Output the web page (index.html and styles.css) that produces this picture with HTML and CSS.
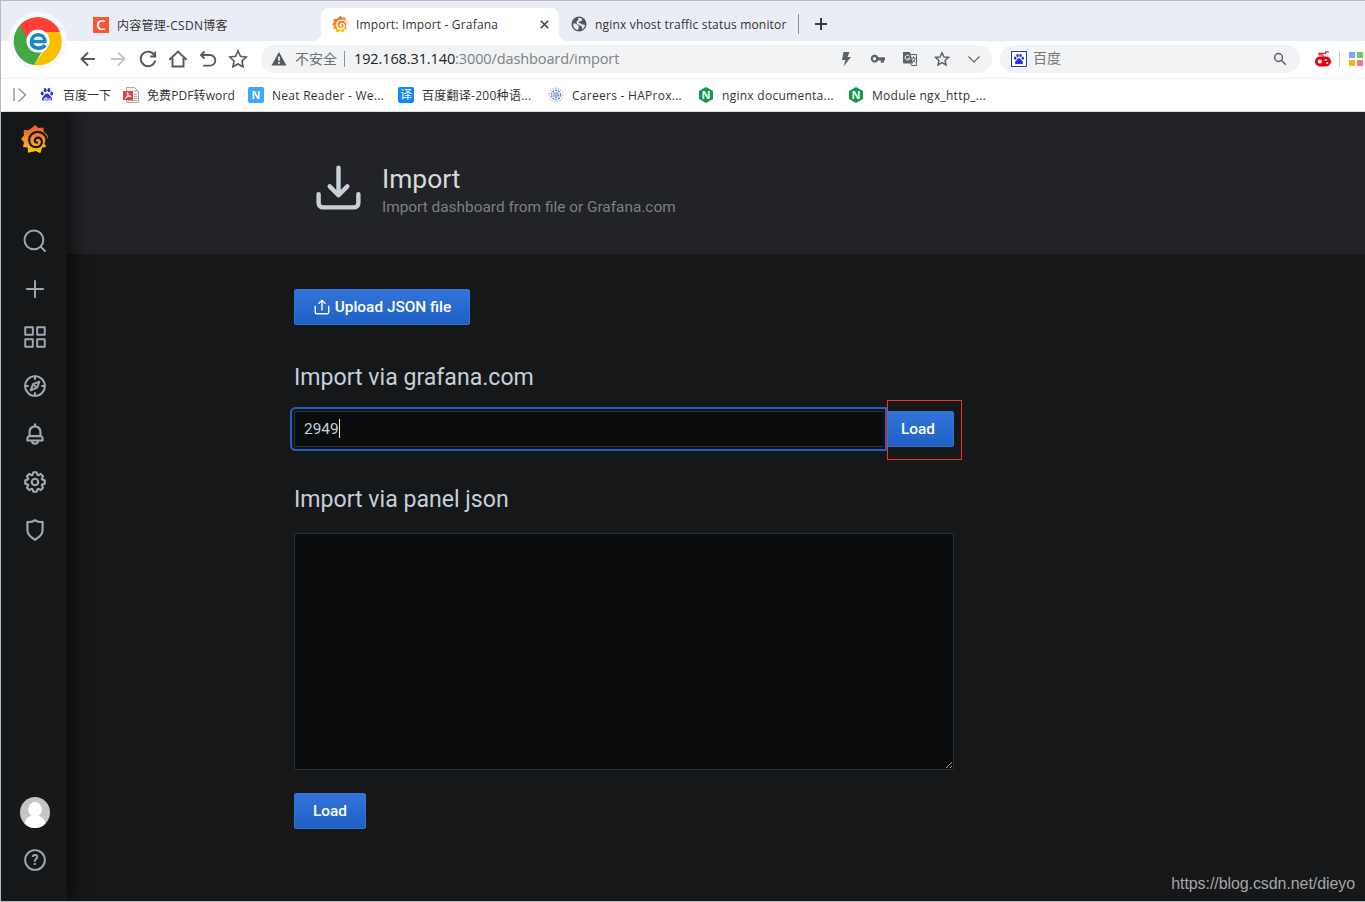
FILE: index.html
```html
<!DOCTYPE html>
<html lang="zh-CN">
<head>
    <meta charset="UTF-8">
    <meta name="viewport" content="width=device-width, initial-scale=1.0">
    <title>Import: Import - Grafana</title>
    <link rel="stylesheet" href="styles.css">
</head>
<body>

<!-- shared symbols -->
<svg width="0" height="0" class="defs">
    <defs>
        <linearGradient id="flame" x1="0" y1="0" x2="0" y2="1">
            <stop offset="0" stop-color="#f05a28"/>
            <stop offset="0.45" stop-color="#f7882a"/>
            <stop offset="1" stop-color="#fbca0a"/>
        </linearGradient>
        <symbol id="grafana" viewBox="0 0 27 29">
            <path fill="url(#flame)" d="M14.3 0l3 3 4.9-.6.7 4.4 3.6 3.4.3 4-2.200-.2c-.2 2-.6 3.400-1.200 4.800l2 2.800-4.300 1.200-1.800 5.500-4.400-2.300-7.900 1.800-.3-5.200-4.700-.5 1-4.500L0 14l3-3.400-.3-5.500 5.100.1z"/>
            <path class="swirl" d="M26 15.500C25.200 9.500 20.500 6.600 16 6.900C11 7.300 8 11.100 8.200 15.200C8.400 19.600 11.600 22.200 15.200 22.200C18.800 22.200 21 19.600 20.900 16.800C20.800 14 18.800 12.500 16.800 12.700C14.800 12.900 13.700 14.400 13.900 16C14.100 17.200 15 17.800 16 17.500"/>
        </symbol>
        <symbol id="paw" viewBox="0 0 16 16">
            <ellipse cx="2.6" cy="6.8" rx="1.7" ry="2.2"/>
            <ellipse cx="5.9" cy="3" rx="1.7" ry="2.4"/>
            <ellipse cx="10.2" cy="3" rx="1.7" ry="2.4"/>
            <ellipse cx="13.4" cy="6.8" rx="1.7" ry="2.2"/>
            <path d="M8 6.8c2 0 2.6 1.8 4 3.2 1.700 1.600 2 2.700 1.500 4-.6 1.600-2.500 1.600-5.500 1.300-3 .3-4.900.3-5.500-1.300-.5-1.300-.2-2.400 1.500-4 1.400-1.400 2-3.200 4-3.200z"/>
        </symbol>
        <symbol id="nginx" viewBox="0 0 16 16">
            <path fill="#119949" d="M8 0l7 4v8l-7 4-7-4V4z"/>
            <text x="8" y="12" text-anchor="middle" class="badge-text">N</text>
        </symbol>
    </defs>
</svg>

<div class="window">
    <div class="chrome-logo">
        <svg width="58" height="58" viewBox="-29 -29 58 58">
            <circle r="29" fill="#f8f9fc"/>
            <path fill="#fc3f33" d="M-18-16A24 24 0 0 1 22-9H0L-10 4z"/>
            <path fill="#fbbf00" d="M22-9A24 24 0 0 1-4 24L9 5L0-9z"/>
            <path fill="#43a745" d="M-18-16A24 24 0 0 0-4 24L6 7L-9 1z"/>
            <circle r="11.500" fill="#fff"/>
            <path fill="none" stroke="#1b87c4" stroke-width="3.600" d="M-6.500.5H7C7-8-6-9-6.500.5C-7 8 4 9 7 4"/>
        </svg>
    </div>

    <div class="tabs">
        <div class="tab tab-first">
            <span class="csdn">C</span>
            <span>内容管理-CSDN博客</span>
        </div>
        <div class="tab tab-active">
            <svg class="light" width="16" height="17"><use href="#grafana"/></svg>
            <span>Import: Import - Grafana</span>
            <svg class="close" width="9" height="9" viewBox="0 0 9 9"><path d="M.8.8l7.400 7.400M8.200.8L.8 8.200"/></svg>
        </div>
        <div class="tab tab-last">
            <svg width="16" height="16" viewBox="0 0 16 16">
                <circle cx="8" cy="8" r="7.500" fill="#54585d"/>
                <path fill="#eaedf5" d="M2.200 7.500c2-.2 3.300.2 4 1.300.6 1 2 .6 1.800 2.200L6.700 14C4 13.500 2 11 2.200 7.500zM7 2.300c1.500-.5 3-.2 4.200.5L10.500 5 8 5.500 7.500 7l2 .3 1 1 2.500.4 1 .3c-.3 2-1.500 3.600-3 4.400l.2-2.400-2-1.500L6 8 5.500 5.500 7.500 4z"/>
            </svg>
            <span>nginx vhost traffic status monitor</span>
        </div>
        <svg class="new-tab" width="12" height="12" viewBox="0 0 12 12"><path d="M6 0v12M0 6h12"/></svg>
    </div>

    <div class="toolbar">
        <div class="nav">
            <svg viewBox="0 0 20 20"><path d="M17 10H4M10 3.500L3.500 10l6.500 6.500"/></svg>
            <svg viewBox="0 0 20 20" class="off"><path d="M3 10h13M10 3.500l6.500 6.500-6.500 6.500"/></svg>
            <svg viewBox="0 0 20 20"><path d="M16.500 6.500A7.300 7.300 0 1 0 17.200 11.500M17.200 2.500v5h-5"/></svg>
            <svg viewBox="0 0 20 20"><path d="M1.500 10.800L10 2.500l8.500 8.300M4.500 9v8.500h11V9"/></svg>
            <svg viewBox="0 0 20 20"><path d="M6.500 2.500L3 6l3.500 3.500M3.500 6H12a5.300 5.300 0 0 1 0 10.600H5"/></svg>
            <svg viewBox="0 0 20 20" class="star"><path d="M10 2l2.500 5.300 5.700.7-4.200 4 1.100 5.800L10 15l-5.100 2.800L6 12 1.800 8l5.700-.7z"/></svg>
        </div>
        <div class="omnibox">
            <svg width="16" height="14" viewBox="0 0 16 14"><path fill="#55595e" d="M8 0l7.500 13.500H.5z"/><path stroke="#fff" stroke-width="1.600" d="M8 4.500v4.300M8 10v1.700"/></svg>
            <span class="unsafe">不安全</span>
            <span class="url"><b>192.168.31.140</b>:3000/dashboard/import</span>
            <div class="omni-icons">
                <svg width="16" height="16" viewBox="0 0 16 16"><path class="solid" d="M5.500 1h6L9.500 6H13L5.500 15.500 7.500 9H4z"/></svg>
                <svg width="16" height="16" viewBox="0 0 16 16"><path class="solid" fill-rule="evenodd" d="M4.500 3.500a4 4 0 0 1 3.800 2.700H15v3.200h-1.200v2.400h-3V9.400H8.300A4 4 0 1 1 4.500 3.500zM4.500 6a1.700 1.700 0 1 0 0 3.400 1.700 1.700 0 0 0 0-3.400z"/></svg>
                <svg width="16" height="16" viewBox="0 0 16 16">
                    <path class="solid" d="M1 1h7l3 11.500H2L1 12z"/>
                    <path fill="none" stroke="#5f6368" d="M8.500 3.500H14.500v11H9.500l-1-2"/>
                    <path fill="none" stroke="#fff" d="M7.500 5.200a2.400 2.400 0 1 0 .3 2.200H5.500"/>
                    <path fill="none" stroke="#5f6368" d="M9.500 7h4M11.500 5.500V7M13 7c-.5 2-1.500 3.500-3 4.500M10.500 8.500l2.800 3"/>
                </svg>
                <svg width="16" height="16" viewBox="0 0 16 16"><path class="line" d="M8 1.800l1.900 4.100 4.500.5-3.300 3.100.9 4.500-4-2.300L4 14l.9-4.500L1.600 6.400l4.500-.5z"/></svg>
                <svg width="16" height="16" viewBox="0 0 16 16"><path class="line thin" d="M2.500 5.500L8 11l5.500-5.500"/></svg>
            </div>
        </div>
        <div class="searchbox">
            <svg class="baidu-box" width="16" height="16" viewBox="-2 -2 20 20"><use href="#paw" width="16" height="16"/></svg>
            <span>百度</span>
            <svg width="14" height="14" viewBox="0 0 14 14"><circle class="line" cx="5.500" cy="5.500" r="3.900"/><path class="line" d="M8.300 8.300l4.500 4.500"/></svg>
        </div>
        <svg class="game" width="16" height="16" viewBox="0 0 16 16">
            <path fill="none" stroke="#e9253a" stroke-width="1.200" d="M8 6V3.800H4V2.300h6.500V.8H14"/>
            <rect y="5.500" width="16" height="10" rx="5" fill="#e60012"/>
            <circle cx="4.800" cy="10.500" r="2.100" fill="#fff"/>
            <circle cx="10.700" cy="9" r="1.100" fill="#fff"/><circle cx="12.300" cy="12" r="1.100" fill="#fff"/>
        </svg>
        <span class="tool-sep"></span>
        <div class="apps"><i class="blue"></i><i class="green"></i><i class="yellow"></i><i class="red"></i></div>
    </div>

    <div class="bookmarks">
        <svg class="expand" width="14" height="16" viewBox="0 0 14 16"><path d="M1 1v13M5.500 1.500L12.500 8l-7 6.500"/></svg>
        <div class="bm bm-1">
            <svg width="16" height="16" class="paw"><use href="#paw" width="14" height="15" x="1"/><text x="8" y="13.500" text-anchor="middle" class="du">du</text></svg>
            <span>百度一下</span>
        </div>
        <div class="bm bm-2">
            <svg width="16" height="16" viewBox="0 0 16 16">
                <path fill="#f4f4f4" stroke="#aaa" d="M3.500.5h8l4 4v11h-12z"/>
                <path stroke="#aaa" d="M11 4h4M11 7.500h3M11 9.500h3M11 11.500h3M5 13.500h9"/>
                <path fill="#e0413d" d="M0 4h10v9H0z"/>
                <path fill="none" stroke="#fff" d="M2 11.500c2.500-1 3.500-4 3-5.500s-1.500.5 0 2.500 3 1.500 3 .7-3-.5-5.500 1.800"/>
            </svg>
            <span>免费PDF转word</span>
        </div>
        <div class="bm">
            <span class="sq sky">N</span>
            <span>Neat Reader - We...</span>
        </div>
        <div class="bm">
            <span class="sq azure">译</span>
            <span>百度翻译-200种语...</span>
        </div>
        <div class="bm">
            <svg width="16" height="16" viewBox="0 0 16 16" class="hap">
                <circle cx="8" cy="8" r="6.800" stroke-dasharray="1.500 1.300" stroke="#b5c8dc"/>
                <circle cx="8" cy="8" r="4.600" stroke-dasharray="1.800 1.100"/>
                <circle cx="8" cy="8" r="2.200" stroke-dasharray="1.400 .9"/>
                <path d="M8 3v10M3 8h10M4.500 4.500l7 7M11.500 4.500l-7 7" stroke-width=".4"/>
            </svg>
            <span>Careers - HAProx...</span>
        </div>
        <div class="bm">
            <svg width="16" height="16"><use href="#nginx"/></svg>
            <span>nginx documenta...</span>
        </div>
        <div class="bm">
            <svg width="16" height="16"><use href="#nginx"/></svg>
            <span>Module ngx_http_...</span>
        </div>
    </div>

    <div class="grafana">
        <div class="sidemenu">
            <svg class="logo" width="27" height="29"><use href="#grafana"/></svg>
            <div class="menu">
                <svg viewBox="0 0 24 24"><g class="stroke"><circle cx="11" cy="11" r="8.700"/><path d="M17.200 17.200l4 4"/></g></svg>
                <svg viewBox="0 0 24 24"><path class="stroke" d="M12 4.500v15M4.500 12h15"/></svg>
                <svg viewBox="0 0 24 24"><path class="stroke" d="M3 3h7v7H3zM14 3h7v7h-7zM3 14h7v7H3zM14 14h7v7h-7z"/></svg>
                <svg viewBox="0 0 24 24"><g class="stroke"><circle cx="12" cy="12" r="9.100"/><path d="M12 3v2.500M12 18.500V21M3 12h2.500M18.500 12H21M16 8l-2 5.500L8 16l2.200-5.700z"/><path d="M11.500 11.500l1 1"/></g></svg>
                <svg viewBox="0 0 24 24"><path d="M18,13.180V10a6,6,0,0,0-5-5.910V3a1,1,0,0,0-2,0V4.090A6,6,0,0,0,6,10v3.180A3,3,0,0,0,4,16v2a1,1,0,0,0,1,1H8.140a4,4,0,0,0,7.720,0H19a1,1,0,0,0,1-1V16A3,3,0,0,0,18,13.180ZM8,10a4,4,0,0,1,8,0v3H8Zm4,10a2,2,0,0,1-1.720-1h3.440A2,2,0,0,1,12,20Zm6-3H6V16a1,1,0,0,1,1-1H17a1,1,0,0,1,1,1Z"/></svg>
                <svg viewBox="0 0 24 24"><path d="M21.320,9.550l-1.890-.63.89-1.780A1,1,0,0,0,20.130,6L18,3.870a1,1,0,0,0-1.150-.19l-1.780.89-.63-1.890A1,1,0,0,0,13.500,2h-3a1,1,0,0,0-.95.68L8.920,4.570,7.140,3.680A1,1,0,0,0,6,3.870L3.870,6a1,1,0,0,0-.19,1.150l.89,1.780-1.890.63A1,1,0,0,0,2,10.500v3a1,1,0,0,0,.68.950l1.890.63-.89,1.780A1,1,0,0,0,3.870,18L6,20.130a1,1,0,0,0,1.150.19l1.780-.89.63,1.890a1,1,0,0,0,.95.680h3a1,1,0,0,0,.95-.68l.63-1.890,1.780.89A1,1,0,0,0,18,20.130L20.130,18a1,1,0,0,0,.19-1.150l-.89-1.780,1.890-.63A1,1,0,0,0,22,13.500v-3A1,1,0,0,0,21.320,9.550ZM20,12.780l-1.200.4A2,2,0,0,0,17.640,16l.57,1.140-1.100,1.100L16,17.640a2,2,0,0,0-2.790,1.160l-.4,1.200H11.220l-.4-1.200A2,2,0,0,0,8,17.640l-1.140.57-1.100-1.100L6.360,16A2,2,0,0,0,5.200,13.180L4,12.780V11.220l1.200-.4A2,2,0,0,0,6.360,8L5.790,6.890l1.100-1.100L8,6.360A2,2,0,0,0,10.820,5.200l.4-1.200h1.560l.4,1.200A2,2,0,0,0,16,6.360l1.140-.57,1.100,1.100L17.640,8a2,2,0,0,0,1.160,2.790l1.200.4ZM12,8a4,4,0,1,0,4,4A4,4,0,0,0,12,8Zm0,6a2,2,0,1,1,2-2A2,2,0,0,1,12,14Z"/></svg>
                <svg viewBox="0 0 24 24"><path d="M19.630,3.650a1,1,0,0,0-.84-.2,8,8,0,0,1-6.220-1.270,1,1,0,0,0-1.140,0A8,8,0,0,1,5.210,3.450a1,1,0,0,0-.84.2A1,1,0,0,0,4,4.430v7.450a9,9,0,0,0,3.770,7.330l3.650,2.600a1,1,0,0,0,1.160,0l3.650-2.600A9,9,0,0,0,20,11.880V4.430A1,1,0,0,0,19.630,3.650ZM18,11.880a7,7,0,0,1-2.930,5.700L12,19.770,8.930,17.580A7,7,0,0,1,6,11.880V5.580a10,10,0,0,0,6-1.390,10,10,0,0,0,6,1.390Z"/></svg>
            </div>
            <div class="menu-bottom">
                <svg class="avatar" width="30" height="31" viewBox="0 0 30 31">
                    <rect width="30" height="31" fill="#c5c5c5"/>
                    <ellipse cx="15" cy="12.500" rx="6.800" ry="7.500" fill="#fff"/>
                    <path fill="#fff" d="M4 31c0-7 3-11.500 8-12h6c5 .5 8 5 8 12z"/>
                </svg>
                <svg width="26" height="26" viewBox="0 0 24 24"><circle class="stroke" cx="12" cy="12" r="9.100"/><text x="12" y="16.500" text-anchor="middle" class="help">?</text></svg>
            </div>
        </div>

        <div class="main">
            <div class="page-header">
                <svg width="53" height="53" viewBox="0 0 24 24"><path d="M3 15v4a2 2 0 0 0 2 2h14a2 2 0 0 0 2-2v-4M12 3v12.500M8 11.500l4 4 4-4"/></svg>
                <div>
                    <h1>Import</h1>
                    <p>Import dashboard from file or Grafana.com</p>
                </div>
            </div>

            <div class="content">
                <button class="btn btn-upload">
                    <svg width="18" height="18" viewBox="0 0 24 24"><path d="M3 11v8a2 2 0 0 0 2 2h14a2 2 0 0 0 2-2v-8M12 16V3M8 7l4-4 4 4"/></svg>
                    Upload JSON file
                </button>

                <h3>Import via grafana.com</h3>
                <div class="input-row">
                    <div class="input">2949<span class="caret"></span></div>
                    <button class="btn btn-load">Load</button>
                    <div class="highlight"></div>
                </div>

                <h3>Import via panel json</h3>
                <textarea></textarea>
                <button class="btn btn-submit">Load</button>
            </div>
        </div>
        <div class="watermark">https://blog.csdn.net/dieyo</div>
    </div>
</div>

</body>
</html>
```
FILE: styles.css
```css
* {
    box-sizing: border-box;
}

body {
    margin: 0;
    font-family: "Open Sans", "Noto Sans CJK SC", sans-serif;
    font-size: 12px;
    color: #333;
    overflow: hidden;
}

svg {
    flex: none;
    display: block;
}

.defs {
    position: absolute;
}

.window {
    position: relative;
    height: 902px;
    border: 1px solid #b8bac3;
    border-right: 0;
    display: flex;
    flex-direction: column;
    background: #fff;
}

.chrome-logo {
    position: absolute;
    left: 8px;
    top: 11px;
}

/* Tab strip */
.tabs {
    height: 40px;
    background: #eaedf5;
    display: flex;
    align-items: flex-end;
    flex: none;
}

.tab {
    height: 33px;
    display: flex;
    align-items: center;
    gap: 8px;
    white-space: nowrap;
    letter-spacing: 0.18px;
}

.tab-first {
    width: 320px;
    padding-left: 92px;
    letter-spacing: 0.28px;
}

.tab-active {
    position: relative;
    width: 238px;
    padding: 0 10px 0 12px;
    background: #fff;
    border-radius: 8px 8px 0 0;
    gap: 7px;
}

/* flared feet of the active tab */
.tab-active::before,
.tab-active::after {
    content: "";
    position: absolute;
    bottom: 0;
    left: -8px;
    width: 8px;
    height: 8px;
    background: radial-gradient(circle at 0 0, transparent 7.5px, #fff 8.5px);
}

.tab-active::after {
    left: 238px;
    background: radial-gradient(circle at 100% 0, transparent 7.5px, #fff 8.5px);
}

.tab-last {
    width: 240px;
    padding-left: 12px;
    height: 20px;
    margin-bottom: 7px;
    border-right: 1px solid #8c8f96;
}

.csdn {
    width: 16px;
    height: 16px;
    background: #fc5531;
    color: #fff;
    font-size: 15px;
    line-height: 15px;
    text-align: center;
    font-weight: 600;
    letter-spacing: 0;
}

.swirl {
    fill: none;
    stroke: var(--swirl, #161719);
    stroke-width: 2.2;
    stroke-linecap: round;
}

.light {
    --swirl: #fff;
    margin-left: -1px;
    margin-right: 1px;
}

.close {
    margin-left: auto;
    stroke: #444;
    stroke-width: 1.6;
}

.new-tab {
    margin: 0 0 11px 16px;
    stroke: #3c4043;
    stroke-width: 2;
}

/* Address row */
.toolbar {
    height: 38px;
    border-bottom: 1px solid #eeeff1;
    display: flex;
    align-items: center;
    padding: 0 0 2px 77px;
    flex: none;
}

.nav {
    display: flex;
    gap: 10px;
    width: 183px;
}

.nav svg {
    width: 20px;
    height: 20px;
    fill: none;
    stroke: #55595e;
    stroke-width: 1.9;
}

.nav .off {
    stroke: #c3c5c8;
}

.nav .star {
    stroke-width: 1.6;
}

.omnibox,
.searchbox {
    height: 28px;
    border-radius: 14px;
    background: #f1f3f4;
    display: flex;
    align-items: center;
    flex: none;
}

.omnibox {
    width: 731px;
    padding-left: 10px;
}

.unsafe {
    font-size: 14px;
    color: #6c7075;
    margin-left: 8px;
    padding-right: 7px;
    line-height: 16px;
    border-right: 1px solid #8f9296;
}

.url {
    margin-left: 9px;
    font-size: 14.5px;
    letter-spacing: -0.11px;
    color: #7d8186;
}

.url b {
    font-weight: normal;
    color: #222;
}

.omni-icons {
    display: flex;
    gap: 16px;
    margin-left: auto;
    margin-right: 10px;
}

.solid {
    fill: #5f6368;
}

.line {
    fill: none;
    stroke: #5f6368;
    stroke-width: 1.5;
}

.thin {
    stroke-width: 1.1;
}

.searchbox {
    width: 300px;
    margin-left: 8px;
    padding: 0 13px 0 11px;
    font-size: 14px;
    line-height: 18px;
    color: #777;
    gap: 6px;
}

.searchbox span {
    flex: 1;
    padding-bottom: 1px;
}

.baidu-box {
    border: 1px solid #2932e1;
    fill: #2932e1;
    background: #fff;
}

.game {
    margin-left: 15px;
}

.tool-sep {
    width: 1px;
    height: 16px;
    background: #c9cbce;
    margin: 0 9px 0 8px;
}

.apps {
    display: grid;
    grid-template-columns: 6px 6px;
    gap: 2px;
}

.apps i {
    height: 6px;
}

.apps .blue { background: #76a7fa; }
.apps .green { background: #67d15c; }
.apps .yellow { background: #f8b318; }
.apps .red { background: #f47d74; }

/* Bookmarks bar */
.bookmarks {
    height: 33px;
    border-bottom: 1px solid #dedfe1;
    display: flex;
    align-items: center;
    padding-left: 12px;
    flex: none;
}

.expand {
    margin-right: 12px;
    fill: none;
    stroke: #8a8d91;
    stroke-width: 1.3;
}

.bm {
    width: 150px;
    display: flex;
    align-items: center;
    gap: 8px;
    white-space: nowrap;
    letter-spacing: 0.27px;
    flex: none;
}

.bm-1 {
    width: 84px;
    letter-spacing: 0;
}

.bm-2 {
    width: 125px;
    letter-spacing: 0.1px;
}

.paw {
    fill: #2932e1;
}

.du {
    fill: #fff;
    font-size: 6px;
    font-weight: bold;
}

.sq {
    width: 16px;
    height: 16px;
    border-radius: 2px;
    color: #fff;
    font-size: 11px;
    line-height: 16px;
    text-align: center;
    font-weight: bold;
    letter-spacing: 0;
}

.sky { background: #3ba7f5; }

.azure {
    background: #1285f7;
    font-size: 12px;
    font-weight: normal;
}

.hap {
    fill: none;
    stroke: #5f88b4;
    stroke-width: 1.4;
}

.badge-text {
    fill: #fff;
    font-size: 11px;
    font-weight: bold;
}

/* Grafana page */
.grafana {
    position: relative;
    flex: 1;
    display: flex;
    overflow: hidden;
    background: #161719;
    color: #c7d0d9;
    font-family: Roboto, sans-serif;
}

.sidemenu {
    width: 66px;
    background: #161719;
    box-shadow: 0 0 22px #000;
    display: flex;
    flex-direction: column;
    align-items: center;
    position: relative;
    padding: 13px 0 28px 2px;
    fill: #9fa7b3;
}

.logo {
    margin-left: -2px;
}

.menu {
    margin-top: 74px;
    display: flex;
    flex-direction: column;
    gap: 22.2px;
}

.menu svg {
    width: 26px;
    height: 26px;
}

.stroke {
    fill: none;
    stroke: #9fa7b3;
    stroke-width: 1.8;
    stroke-linejoin: round;
    stroke-linecap: round;
}

.menu-bottom {
    margin-top: auto;
    display: flex;
    flex-direction: column;
    align-items: center;
    gap: 19px;
}

.avatar {
    border-radius: 50%;
    box-shadow: 0 0 14px rgba(255, 255, 255, 0.05);
}

.help {
    font-size: 13px;
    font-weight: bold;
}

.main {
    flex: 1;
}

.page-header {
    height: 142px;
    background: #222326;
    padding: 49px 0 0 245px;
    display: flex;
    gap: 17px;
}

.page-header path {
    fill: none;
    stroke: #c7d0d9;
    stroke-width: 2;
    stroke-linecap: round;
    stroke-linejoin: round;
}

h1,
h3,
p {
    margin: 0;
    font-weight: 400;
}

h1 {
    font-size: 26.4px;
    line-height: 36px;
    color: #d8d9da;
}

.page-header p {
    font-size: 15.4px;
    line-height: 20px;
    color: #7b8087;
}

.content {
    width: 660px;
    margin-left: 227px;
    padding-top: 35px;
}

.btn {
    height: 36px;
    border: 1px solid #3274d9;
    border-radius: 2px;
    background: linear-gradient(#3274d9, #1f60c4);
    color: #fff;
    font-family: Roboto, sans-serif;
    font-size: 15.4px;
    font-weight: 500;
    padding: 0;
    display: flex;
    align-items: center;
    justify-content: center;
}

.btn-upload {
    width: 176px;
    gap: 4px;
}

.btn-upload path {
    fill: none;
    stroke: #fff;
    stroke-width: 1.8;
    stroke-linecap: round;
    stroke-linejoin: round;
}

h3 {
    font-size: 23.1px;
    line-height: 30px;
    margin: 38px 0 18px;
}

.input-row {
    position: relative;
    display: flex;
}

.input {
    position: relative;
    z-index: 1;
    width: 589px;
    height: 36px;
    padding: 0 9px;
    border: 1px solid #2c3235;
    border-right: 0;
    border-radius: 2px 0 0 2px;
    background: #0b0c0e;
    box-shadow: 0 0 0 2px #141414, 0 0 0 4px #1f60c4;
    font-size: 15.4px;
    display: flex;
    align-items: center;
}

.caret {
    width: 1px;
    height: 19px;
    margin-top: -1px;
    background: #e6e6e6;
}

.btn-load {
    width: 71px;
    padding-right: 1px;
}

/* red box drawn over the first Load button */
.highlight {
    position: absolute;
    z-index: 2;
    left: 593px;
    top: -11px;
    width: 75px;
    height: 60px;
    border: 1px solid #f5312f;
}

textarea {
    display: block;
    width: 660px;
    height: 237px;
    background: #0b0c0e;
    border: 1px solid #2c3235;
    border-radius: 2px;
}

.btn-submit {
    width: 72px;
    margin-top: 23px;
}

.watermark {
    position: absolute;
    right: 10px;
    bottom: 8px;
    font-family: "Liberation Sans", Arial, sans-serif;
    font-size: 16px;
    line-height: 18px;
    letter-spacing: -0.08px;
    color: #a5a6a8;
}
```
